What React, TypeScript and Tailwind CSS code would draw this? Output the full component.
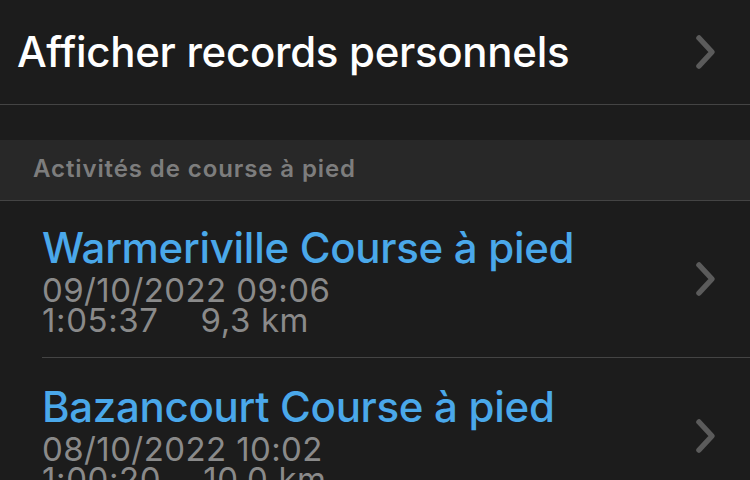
import React from 'react';

const Chevron = () => (
  <svg width="22" height="36" viewBox="0 0 22 36" className="shrink-0">
    <path d="M4 4 L17 18 L4 32" fill="none" stroke="#5b5b5b" strokeWidth="5.5" strokeLinecap="round" strokeLinejoin="round" />
  </svg>
);

interface Activity {
  title: string;
  date: string;
  duration: string;
  distance: string;
}

const activities: Activity[] = [
  { title: 'Warmeriville Course à pied', date: '09/10/2022 09:06', duration: '1:05:37', distance: '9,3 km' },
  { title: 'Bazancourt Course à pied', date: '08/10/2022 10:02', duration: '1:00:20', distance: '10,0 km' },
];

export default function App() {
  return (
    <div className="w-[750px] h-[480px] overflow-hidden bg-[#1c1c1c] font-['Inter','Liberation_Sans',sans-serif]">
      <div className="h-[105px] flex items-center justify-between pl-[17px] pr-[33px] border-b border-[#444444]">
        <span className="text-[42px] leading-[42px] font-medium text-white tracking-[-0.3px]">Afficher records personnels</span>
        <Chevron />
      </div>
      <div className="h-[35px]" />
      <div className="h-[61px] flex items-center pl-[33px] pb-[3px] bg-[#282828] border-b border-[#444444]">
        <span className="text-[24px] leading-[24px] font-semibold text-[#7d7d7d] tracking-[0.9px]">Activités de course à pied</span>
      </div>
      <div className="pl-[42px]">
        {activities.map((a, i) => (
          <div
            key={a.title}
            className={`flex justify-between pr-[33px] ${i > 0 ? 'h-[157px] border-t border-[#444444]' : 'h-[156px]'}`}
          >
            <div className={`flex flex-col ${i > 0 ? 'pt-[27px]' : 'pt-[25px]'}`}>
              <span className="text-[42px] font-medium text-[#4aa8ea] leading-[44px] tracking-[-0.3px]">{a.title}</span>
              <span className="mt-[5px] text-[33px] text-[#8a8a8a] leading-[30px] tracking-[0.4px]">{a.date}</span>
              <div className="flex gap-[42px] text-[33px] text-[#8a8a8a] leading-[30px] tracking-[0.6px]">
                <span>{a.duration}</span>
                <span>{a.distance}</span>
              </div>
            </div>
            <div className="flex items-center">
              <Chevron />
            </div>
          </div>
        ))}
      </div>
    </div>
  );
}
